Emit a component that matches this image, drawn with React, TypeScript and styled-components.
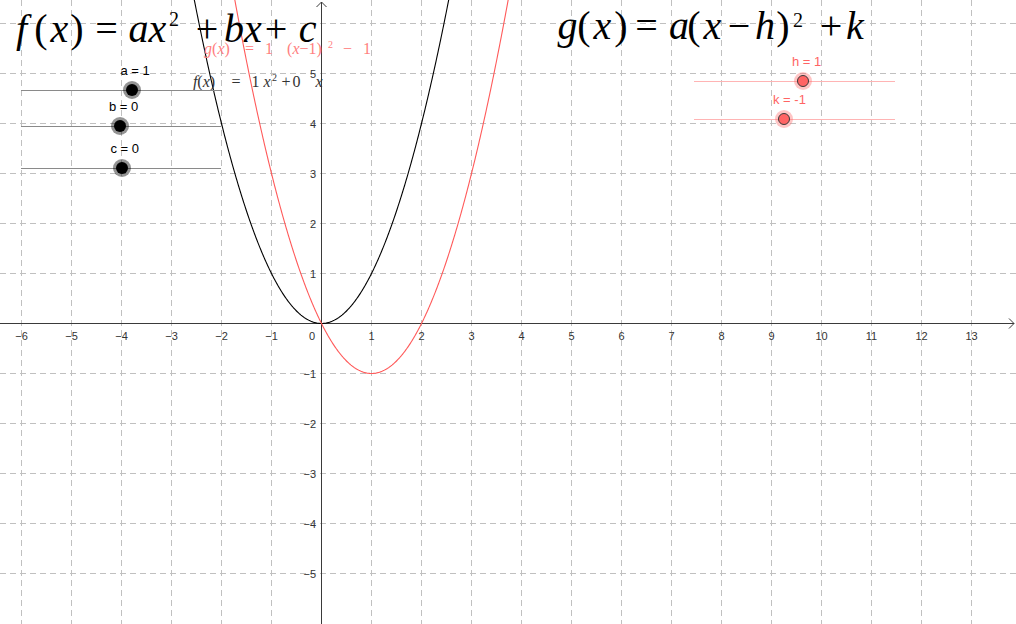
import React from 'react';
import styled, { createGlobalStyle } from 'styled-components';

const W = 1016;
const H = 624;
const OX = 321.5;
const OY = 323.5;
const U = 50;

const GlobalStyle = createGlobalStyle`
  html, body {
    margin: 0;
    padding: 0;
    background: #ffffff;
    overflow: hidden;
  }
`;

const Stage = styled.div`
  position: relative;
  width: ${W}px;
  height: ${H}px;
  overflow: hidden;
  background: #ffffff;
  font-family: 'Liberation Sans', Arial, sans-serif;
`;

const Plot = styled.svg`
  position: absolute;
  left: 0;
  top: 0;
  display: block;
`;

const MathRow = styled.div<{ $top: number; $size: number; $color: string }>`
  position: absolute;
  left: 0;
  top: ${({ $top }) => $top}px;
  display: flex;
  align-items: baseline;
  font-family: 'Liberation Serif', 'Times New Roman', serif;
  font-size: ${({ $size }) => $size}px;
  line-height: 1;
  color: ${({ $color }) => $color};
  white-space: nowrap;
`;

const Glyph = styled.span<{ $w: number; $ml: number; $italic?: boolean; $up?: number; $size?: number }>`
  display: inline-flex;
  justify-content: center;
  width: ${({ $w }) => $w}px;
  margin-left: ${({ $ml }) => $ml}px;
  font-style: ${({ $italic }) => ($italic ? 'italic' : 'normal')};
  ${({ $size }) => ($size ? `font-size: ${$size}px;` : '')}
  ${({ $up }) => ($up ? `transform: translateY(-${$up}px);` : '')}
`;

const I = styled.i`
  font-style: italic;
`;

const SliderWrap = styled.div<{ $x: number; $y: number; $len: number }>`
  position: absolute;
  left: ${({ $x }) => $x}px;
  top: ${({ $y }) => $y}px;
  width: ${({ $len }) => $len}px;
  height: 1px;
`;

const Track = styled.div<{ $red?: boolean }>`
  width: 100%;
  height: 1px;
  background: ${({ $red }) => ($red ? '#ffb4b4' : '#8a8a8a')};
`;

const Knob = styled.div<{ $at: number; $red?: boolean }>`
  position: absolute;
  top: -6px;
  left: ${({ $at }) => $at - 6}px;
  width: 12px;
  height: 12px;
  box-sizing: border-box;
  border-radius: 50%;
  background: ${({ $red }) => ($red ? '#ff6464' : '#000000')};
  border: ${({ $red }) => ($red ? '1px solid #3a3a3a' : 'none')};
  box-shadow: ${({ $red }) =>
    $red ? '0 0 0 3px rgba(255, 110, 110, 0.4)' : '0 0 0 3px rgba(0, 0, 0, 0.42)'};
`;

const SliderLabel = styled.div<{ $at: number; $red?: boolean }>`
  position: absolute;
  top: -26px;
  left: ${({ $at }) => $at - 11}px;
  font-family: 'Liberation Sans', Arial, sans-serif;
  font-size: 13px;
  line-height: 13px;
  white-space: nowrap;
  color: ${({ $red }) => ($red ? '#ff6464' : '#000000')};
`;

type Tok = { t: React.ReactNode; l: number; r: number; i?: boolean; sup?: boolean };

const Formula = ({
  toks,
  top,
  size,
  color,
  supSize,
  supUp,
}: {
  toks: Tok[];
  top: number;
  size: number;
  color: string;
  supSize: number;
  supUp: number;
}) => {
  let prev = 0;
  return (
    <MathRow $top={top} $size={size} $color={color}>
      {toks.map((k, n) => {
        const ml = k.l - prev;
        prev = k.r;
        return (
          <Glyph
            key={n}
            $w={k.r - k.l}
            $ml={ml}
            $italic={k.i}
            $size={k.sup ? supSize : undefined}
            $up={k.sup ? supUp : undefined}
          >
            {k.t}
          </Glyph>
        );
      })}
    </MathRow>
  );
};

const Slider = ({
  x,
  y,
  len,
  knob,
  label,
  red,
}: {
  x: number;
  y: number;
  len: number;
  knob: number;
  label: string;
  red?: boolean;
}) => (
  <SliderWrap $x={x} $y={y} $len={len}>
    <Track $red={red} />
    <SliderLabel $at={knob - x} $red={red}>
      {label}
    </SliderLabel>
    <Knob $at={knob - x} $red={red} />
  </SliderWrap>
);

const fBig: Tok[] = [
  { t: 'f', l: 10, r: 33, i: true },
  { t: '(', l: 35, r: 47 },
  { t: 'x', l: 47, r: 72, i: true },
  { t: ')', l: 72, r: 82 },
  { t: '=', l: 95, r: 118 },
  { t: 'ax', l: 128, r: 167, i: true },
  { t: '2', l: 168, r: 180, sup: true },
  { t: '+', l: 197, r: 217 },
  { t: 'bx', l: 223, r: 263, i: true },
  { t: '+', l: 267, r: 285 },
  { t: 'c', l: 300, r: 315, i: true },
];

const gBig: Tok[] = [
  { t: 'g', l: 558, r: 577, i: true },
  { t: '(', l: 578, r: 590 },
  { t: 'x', l: 590, r: 615, i: true },
  { t: ')', l: 615, r: 627 },
  { t: '=', l: 635, r: 658 },
  { t: 'a', l: 670, r: 688, i: true },
  { t: '(', l: 688, r: 700 },
  { t: 'x', l: 700, r: 725, i: true },
  { t: '\u2212', l: 730, r: 748 },
  { t: 'h', l: 753, r: 777, i: true },
  { t: ')', l: 778, r: 788 },
  { t: '2', l: 793, r: 803, sup: true },
  { t: '+', l: 820, r: 842 },
  { t: 'k', l: 845, r: 865, i: true },
];

const gSmall: Tok[] = [
  {
    t: (
      <>
        <I>g</I>(<I>x</I>)
      </>
    ),
    l: 203,
    r: 231,
  },
  { t: '=', l: 242, r: 257 },
  { t: '1', l: 266, r: 272 },
  {
    t: (
      <>
        (<I>x</I>{'\u2212'}1)
      </>
    ),
    l: 284,
    r: 325,
  },
  { t: '2', l: 328, r: 333, sup: true },
  { t: '\u2212', l: 342, r: 353 },
  { t: '1', l: 364, r: 370 },
];

const fSmall: Tok[] = [
  {
    t: (
      <>
        <I>f</I>(<I>x</I>)
      </>
    ),
    l: 188,
    r: 220,
  },
  { t: '=', l: 230, r: 242 },
  { t: '1', l: 253, r: 258 },
  { t: 'x', l: 262, r: 272, i: true },
  { t: '2', l: 272, r: 277, sup: true },
  { t: '+', l: 280, r: 292 },
  { t: '0', l: 293, r: 300 },
  { t: 'x', l: 313, r: 325, i: true },
];

const curve = (fn: (x: number) => number) => {
  const pts: string[] = [];
  for (let px = 150; px <= 560; px += 0.5) {
    const y = fn((px - OX) / U);
    const py = OY - U * y;
    if (py > -60 && py < H + 60) pts.push(`${px.toFixed(1)},${py.toFixed(2)}`);
  }
  return pts.join(' ');
};

const label = (n: number) => (n < 0 ? `\u2212${-n}` : `${n}`);

const Graph = () => {
  const vx: number[] = [];
  for (let k = 0; k < 20; k++) vx.push(21.5 + 50 * k);
  const hy: number[] = [];
  for (let k = 0; k < 12; k++) hy.push(23.5 + 50 * k);
  const xs: number[] = [];
  for (let n = -6; n <= 13; n++) if (n !== 0) xs.push(n);
  const ys = [5, 4, 3, 2, 1, -1, -2, -3, -4, -5];

  return (
    <Plot width={W} height={H} viewBox={`0 0 ${W} ${H}`}>
      <g stroke="#c0c0c0" strokeWidth={1} strokeDasharray="6 4">
        {vx.filter((x) => x !== OX).map((x) => (
          <line key={`v${x}`} x1={x} y1={0} x2={x} y2={H} />
        ))}
        {hy.filter((y) => y !== OY).map((y) => (
          <line key={`h${y}`} x1={0} y1={y} x2={W} y2={y} />
        ))}
      </g>
      <g stroke="#3a3a3a" strokeWidth={1} fill="none">
        <line x1={0} y1={OY} x2={1014} y2={OY} />
        <polyline points={`1009,${OY - 5} 1014,${OY} 1009,${OY + 5}`} />
        <line x1={OX} y1={H} x2={OX} y2={2} />
        <polyline points={`${OX - 5},7 ${OX},2 ${OX + 5},7`} />
      </g>
      <g fontFamily="'Liberation Sans', Arial, sans-serif" fontSize={11} fill="#333333">
        {xs.map((n) => (
          <text key={`xl${n}`} x={OX + U * n} y={339.5} textAnchor="middle">
            {label(n)}
          </text>
        ))}
        <text x={312} y={339.5} textAnchor="middle">
          0
        </text>
        {ys.map((n) => (
          <text key={`yl${n}`} x={316} y={OY - U * n + 4} textAnchor="end">
            {label(n)}
          </text>
        ))}
      </g>
      <polyline points={curve((x) => x * x)} fill="none" stroke="#000000" strokeWidth={1.1} />
      <polyline
        points={curve((x) => (x - 1) * (x - 1) - 1)}
        fill="none"
        stroke="#ff5a5a"
        strokeWidth={1.1}
      />
    </Plot>
  );
};

export default function App() {
  return (
    <>
      <GlobalStyle />
      <Stage>
        <Graph />
        <Formula toks={fBig} top={9.2} size={40} color="#000000" supSize={20} supUp={15.7} />
        <Formula toks={gBig} top={5.8} size={40} color="#000000" supSize={20} supUp={12.3} />
        <Formula toks={gSmall} top={40.6} size={16} color="#ff8080" supSize={10} supUp={6} />
        <Formula toks={fSmall} top={74.1} size={16} color="#333333" supSize={10} supUp={6} />
        <Slider x={21} y={90} len={201} knob={131.5} label="a = 1" />
        <Slider x={21} y={126} len={200} knob={120} label="b = 0" />
        <Slider x={21} y={168} len={200} knob={121.5} label="c = 0" />
        <Slider x={694} y={81} len={201} knob={803} label="h = 1" red />
        <Slider x={694} y={119} len={201} knob={784} label="k = -1" red />
      </Stage>
    </>
  );
}
